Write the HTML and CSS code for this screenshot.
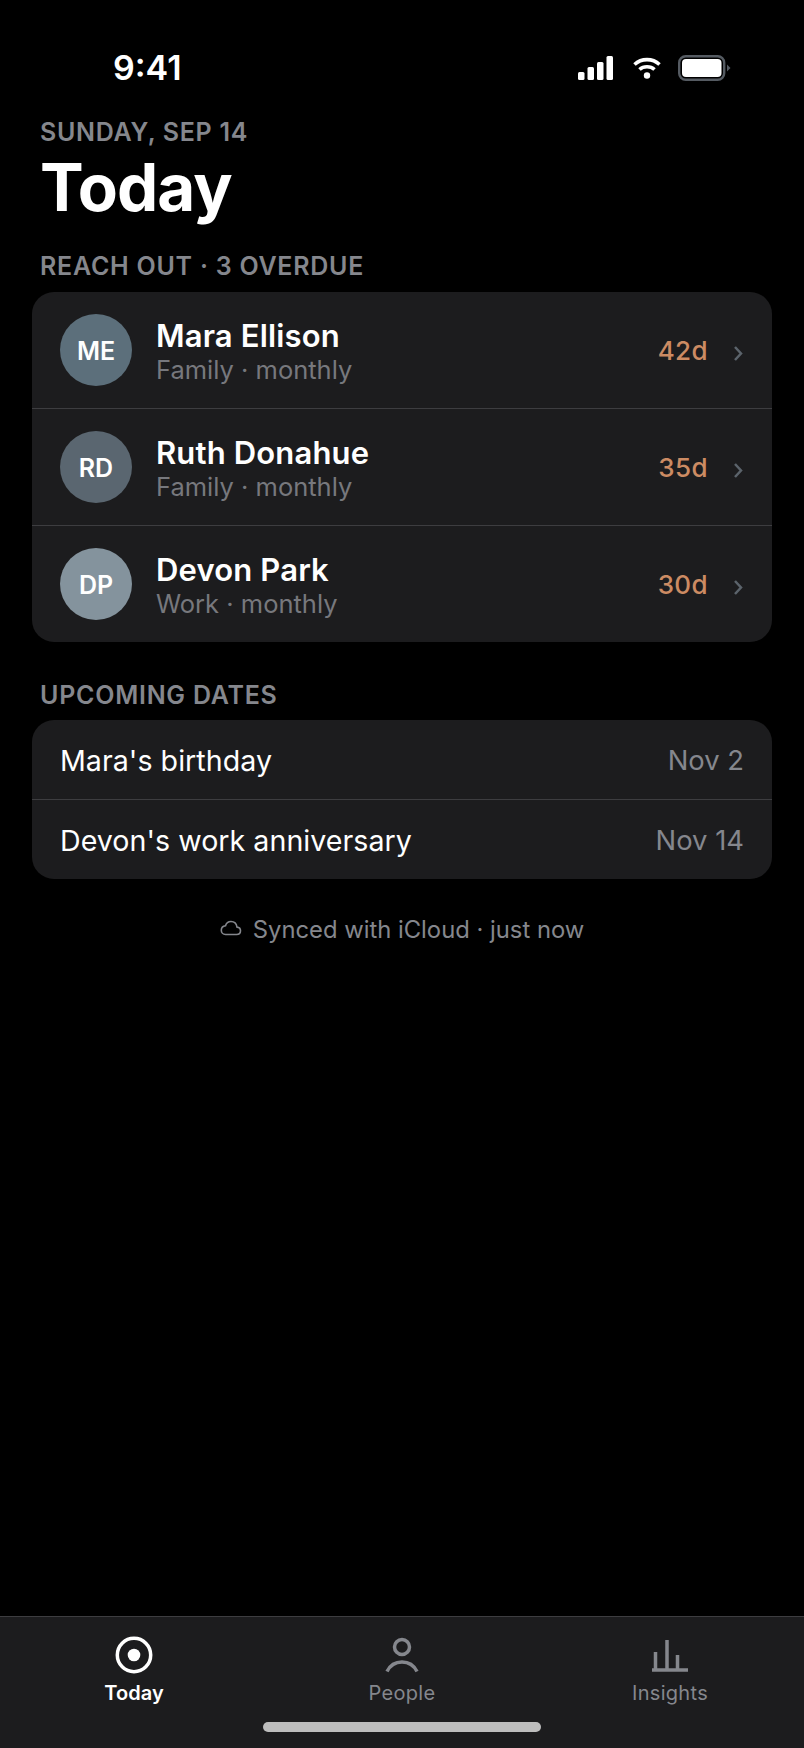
FILE: index.html
```html
<!DOCTYPE html>
<html lang="en">
<head>
<meta charset="utf-8">
<title>Today</title>
<link rel="stylesheet" href="styles.css">
</head>
<body>
<div class="screen">
  <div class="status">
    <span class="time">9:41</span>
    <div class="status-icons">
      <svg class="i-signal" width="35" height="24" viewBox="0 0 35 24"><rect x="0" y="16" width="6.500" height="8" rx="1.500"/><rect x="9.500" y="11" width="6.500" height="13" rx="1.500"/><rect x="19" y="6" width="6.500" height="18" rx="1.500"/><rect x="28.500" y="0" width="6.500" height="24" rx="1.500"/></svg>
      <svg class="i-wifi" width="28" height="22" viewBox="0 0 28 22"><path d="M1.500 7.500C8.500 1 19.500 1 26.500 7.500" /><path d="M6.500 12.500C10.500 8.800 17.500 8.800 21.500 12.500"/><circle cx="14" cy="18.500" r="3.200"/></svg>
      <svg class="i-batt" width="53" height="26" viewBox="0 0 53 26"><rect x="1.200" y="1.200" width="45" height="23.600" rx="6.500" class="b-frame"/><rect x="4" y="4" width="39.500" height="18" rx="4" class="b-fill"/><path d="M49 9.500L52.500 13L49 16.500Z" class="b-cap"/></svg>
    </div>
  </div>

  <main class="content">
    <div class="date">SUNDAY, SEP 14</div>
    <h1 class="title">Today</h1>

    <h2 class="section first">REACH OUT · 3 OVERDUE</h2>
    <section class="card">
      <div class="row person">
        <div class="avatar a1">ME</div>
        <div class="who"><div class="name">Mara Ellison</div><div class="sub">Family · monthly</div></div>
        <span class="days">42d</span>
        <svg class="chev" width="10" height="16" viewBox="0 0 10 16"><path d="M2 2L8 8.500L2 15"/></svg>
      </div>
      <div class="row person">
        <div class="avatar a2">RD</div>
        <div class="who"><div class="name">Ruth Donahue</div><div class="sub">Family · monthly</div></div>
        <span class="days">35d</span>
        <svg class="chev" width="10" height="16" viewBox="0 0 10 16"><path d="M2 2L8 8.500L2 15"/></svg>
      </div>
      <div class="row person">
        <div class="avatar a3">DP</div>
        <div class="who"><div class="name">Devon Park</div><div class="sub">Work · monthly</div></div>
        <span class="days">30d</span>
        <svg class="chev" width="10" height="16" viewBox="0 0 10 16"><path d="M2 2L8 8.500L2 15"/></svg>
      </div>
    </section>

    <h2 class="section second">UPCOMING DATES</h2>
    <section class="card">
      <div class="row date-row"><span class="event">Mara's birthday</span><span class="when">Nov 2</span></div>
      <div class="row date-row"><span class="event">Devon's work anniversary</span><span class="when">Nov 14</span></div>
    </section>

    <div class="sync">
      <svg class="cloud" width="22" height="16" viewBox="0 0 22 16"><path d="M5.500 14.500H16.500C18.800 14.500 20.500 12.900 20.500 10.800C20.500 8.900 19 7.300 17 7.100C16.500 3.800 14 1.500 11 1.500C8.400 1.500 6.200 3.200 5.500 5.700C3 6 1.300 7.900 1.300 10.200C1.300 12.600 3.100 14.500 5.500 14.500Z"/></svg>
      <span>Synced with iCloud · just now</span>
    </div>
  </main>

  <nav class="tabbar">
    <div class="tab active">
      <svg width="38" height="38" viewBox="0 0 38 38"><circle cx="19" cy="19" r="16.700" class="st"/><circle cx="19" cy="19" r="6.300" class="fl"/></svg>
      <span>Today</span>
    </div>
    <div class="tab">
      <svg width="38" height="38" viewBox="0 0 38 38"><circle cx="19" cy="11" r="7.500" class="st"/><path d="M4 35.500C7 29.500 12.500 26 19 26C25.500 26 31 29.500 34 35.500" class="st"/></svg>
      <span>People</span>
    </div>
    <div class="tab">
      <svg width="38" height="38" viewBox="0 0 38 38"><path d="M1 34H37M4.500 33V16M16 33V4M26.500 33V19" class="st"/></svg>
      <span>Insights</span>
    </div>
    <div class="home"></div>
  </nav>
</div>
</body>
</html>
```

FILE: styles.css
```css
* { box-sizing: border-box; }
html, body { margin: 0; padding: 0; background: #000; }
body { font-family: Inter, "Liberation Sans", sans-serif; color: #fff; }
.screen { width: 804px; height: 1748px; display: flex; flex-direction: column; background: #000; }

.status { height: 116px; padding: 48px 73px 0 113px; display: flex; justify-content: space-between; align-items: flex-start; flex: none; }
.time { font-size: 34px; font-weight: 600; line-height: 40px; }
.status-icons { display: flex; align-items: center; gap: 17px; padding-top: 7px; }
.status-icons svg { display: block; fill: #fff; }
.i-wifi { margin-left: 3px; }
.i-wifi path { fill: none; stroke: #fff; stroke-width: 3.600; }
.b-frame { fill: none; stroke: #555b62; stroke-width: 2.400; }
.b-fill { fill: #fff; }
.b-cap { fill: #555b62; }

.content { flex: 1; padding: 0 32px; }
.date { padding-left: 8px; padding-top: 1px; font-size: 25px; line-height: 30px; font-weight: 600; letter-spacing: 0.7px; color: #85878d; }
.title { margin: 3px 0 0; padding-left: 8px; font-size: 65.500px; line-height: 76px; font-weight: 700; letter-spacing: -0.9px; color: #fff; }
.section { margin: 0; padding-left: 8px; font-size: 25px; line-height: 30px; font-weight: 600; letter-spacing: 0.75px; color: #85878d; }
.section.first { margin-top: 25px; margin-bottom: 11px; }
.section.second { margin-top: 38px; margin-bottom: 10px; }

.card { background: #1c1c1e; border-radius: 22px; overflow: hidden; }
.row { display: flex; align-items: center; padding: 0 28px; }
.row + .row { border-top: 1px solid #3d3d40; }
.person { height: 116px; }
.person + .person { height: 117px; }
.avatar { width: 72px; height: 72px; padding-top: 2px; border-radius: 50%; display: flex; align-items: center; justify-content: center; font-size: 25px; font-weight: 600; color: #fff; flex: none; }
.a1 { background: #5c6f7b; }
.a2 { background: #5a6670; }
.a3 { background: #84939d; }
.who { flex: 1; margin-left: 24px; padding-top: 2px; }
.name { font-size: 31px; line-height: 36px; font-weight: 600; letter-spacing: 0.15px; }
.sub { font-size: 25.500px; line-height: 31px; color: #77787d; }
.days { font-size: 26px; font-weight: 500; letter-spacing: 0.4px; color: #cc8b63; }
.chev { margin: 5px 1px 0 25px; }
.chev path { fill: none; stroke: #5b636b; stroke-width: 2.500; }
.date-row { height: 79px; padding-top: 1px; justify-content: space-between; }
.date-row + .date-row { height: 80px; }
.event { font-size: 28.600px; letter-spacing: 0.03px; color: #fff; }
.when { font-size: 27.400px; color: #85878d; }

.sync { margin-top: 36px; display: flex; justify-content: center; align-items: center; gap: 11px; font-size: 23.800px; line-height: 30px; color: #85878d; }
.cloud { fill: none; stroke: #85878d; stroke-width: 1.600; margin-top: -5px; }

.tabbar { position: relative; flex: none; height: 132px; background: #1c1c1e; border-top: 1px solid #3d3d40; display: grid; grid-template-columns: repeat(3, 268px); }
.tab { display: flex; flex-direction: column; align-items: center; padding-top: 19px; font-size: 20px; line-height: 24px; letter-spacing: 0.3px; color: #85878d; }
.tab svg { display: block; margin-bottom: 7px; }
.tab.active { color: #fff; font-weight: 600; letter-spacing: 0.1px; }
.st { fill: none; stroke: #85878d; stroke-width: 3.500; }
.active .st { stroke: #fff; }
.fl { fill: #fff; }
.home { position: absolute; left: 263px; top: 105px; width: 278px; height: 10px; border-radius: 5px; background: #bdbdbd; }
```
